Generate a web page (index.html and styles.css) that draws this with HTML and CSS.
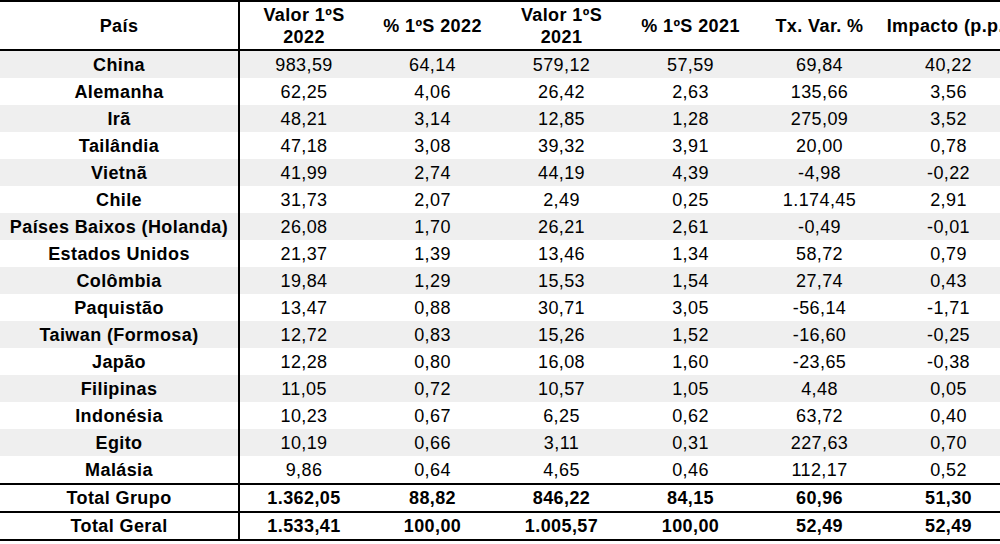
FILE: index.html
```html
<!DOCTYPE html>
<html lang="pt">
<head>
<meta charset="utf-8">
<title>Importações por país</title>
<link rel="stylesheet" href="styles.css">
</head>
<body>
<div class="viewport">
<table class="data">
  <colgroup>
    <col class="c-pais">
    <col class="c-first">
    <col class="c-num">
    <col class="c-num">
    <col class="c-num">
    <col class="c-num">
    <col class="c-num">
  </colgroup>
  <thead>
    <tr>
      <th class="pais">País</th>
      <th>Valor 1ºS<br>2022</th>
      <th>% 1ºS 2022</th>
      <th>Valor 1ºS<br>2021</th>
      <th>% 1ºS 2021</th>
      <th>Tx. Var. %</th>
      <th class="nowrap">Impacto (p.p.)</th>
    </tr>
  </thead>
  <tbody>
    <tr class="alt"><td class="pais">China</td><td>983,59</td><td>64,14</td><td>579,12</td><td>57,59</td><td>69,84</td><td>40,22</td></tr>
    <tr><td class="pais">Alemanha</td><td>62,25</td><td>4,06</td><td>26,42</td><td>2,63</td><td>135,66</td><td>3,56</td></tr>
    <tr class="alt"><td class="pais">Irã</td><td>48,21</td><td>3,14</td><td>12,85</td><td>1,28</td><td>275,09</td><td>3,52</td></tr>
    <tr><td class="pais">Tailândia</td><td>47,18</td><td>3,08</td><td>39,32</td><td>3,91</td><td>20,00</td><td>0,78</td></tr>
    <tr class="alt"><td class="pais">Vietnã</td><td>41,99</td><td>2,74</td><td>44,19</td><td>4,39</td><td>-4,98</td><td>-0,22</td></tr>
    <tr><td class="pais">Chile</td><td>31,73</td><td>2,07</td><td>2,49</td><td>0,25</td><td>1.174,45</td><td>2,91</td></tr>
    <tr class="alt"><td class="pais">Países Baixos (Holanda)</td><td>26,08</td><td>1,70</td><td>26,21</td><td>2,61</td><td>-0,49</td><td>-0,01</td></tr>
    <tr><td class="pais">Estados Unidos</td><td>21,37</td><td>1,39</td><td>13,46</td><td>1,34</td><td>58,72</td><td>0,79</td></tr>
    <tr class="alt"><td class="pais">Colômbia</td><td>19,84</td><td>1,29</td><td>15,53</td><td>1,54</td><td>27,74</td><td>0,43</td></tr>
    <tr><td class="pais">Paquistão</td><td>13,47</td><td>0,88</td><td>30,71</td><td>3,05</td><td>-56,14</td><td>-1,71</td></tr>
    <tr class="alt"><td class="pais">Taiwan (Formosa)</td><td>12,72</td><td>0,83</td><td>15,26</td><td>1,52</td><td>-16,60</td><td>-0,25</td></tr>
    <tr><td class="pais">Japão</td><td>12,28</td><td>0,80</td><td>16,08</td><td>1,60</td><td>-23,65</td><td>-0,38</td></tr>
    <tr class="alt"><td class="pais">Filipinas</td><td>11,05</td><td>0,72</td><td>10,57</td><td>1,05</td><td>4,48</td><td>0,05</td></tr>
    <tr><td class="pais">Indonésia</td><td>10,23</td><td>0,67</td><td>6,25</td><td>0,62</td><td>63,72</td><td>0,40</td></tr>
    <tr class="alt"><td class="pais">Egito</td><td>10,19</td><td>0,66</td><td>3,11</td><td>0,31</td><td>227,63</td><td>0,70</td></tr>
    <tr><td class="pais">Malásia</td><td>9,86</td><td>0,64</td><td>4,65</td><td>0,46</td><td>112,17</td><td>0,52</td></tr>
  </tbody>
  <tfoot>
    <tr class="total grupo"><td class="pais">Total Grupo</td><td>1.362,05</td><td>88,82</td><td>846,22</td><td>84,15</td><td>60,96</td><td>51,30</td></tr>
    <tr class="total geral"><td class="pais">Total Geral</td><td>1.533,41</td><td>100,00</td><td>1.005,57</td><td>100,00</td><td>52,49</td><td>52,49</td></tr>
  </tfoot>
</table>
</div>
</body>
</html>
```

FILE: styles.css
```css
html, body {
  margin: 0;
  padding: 0;
  background: #ffffff;
}

body {
  overflow: hidden;
  font-family: "Liberation Sans", Arial, sans-serif;
  color: #000000;
}

.viewport {
  width: 1000px;
  height: 544px;
  overflow: hidden;
}

.data {
  width: 1013px;
  table-layout: fixed;
  border-collapse: separate;
  border-spacing: 0;
  font-size: 18px;
  letter-spacing: 0.4px;
}

.c-pais { width: 240px; }
.c-first { width: 128px; }
.c-num { width: 129px; }

.data th,
.data td {
  box-sizing: border-box;
  padding: 0;
  text-align: center;
  vertical-align: middle;
  white-space: nowrap;
}

.data th {
  height: 51px;
  font-weight: bold;
  line-height: 22px;
  border-top: 2px solid #000;
  border-bottom: 2px solid #000;
}

.data td {
  height: 27px;
  line-height: 20px;
  font-weight: normal;
}

.data .pais {
  font-weight: bold;
  border-right: 2px solid #000;
}

.data tbody tr.alt td {
  background: #efefef;
}

.data tfoot td {
  font-weight: bold;
  border-top: 2px solid #000;
}

.data tr.grupo td {
  height: 28px;
}

.data tr.geral td {
  height: 30px;
  border-bottom: 2px solid #000;
}
```
